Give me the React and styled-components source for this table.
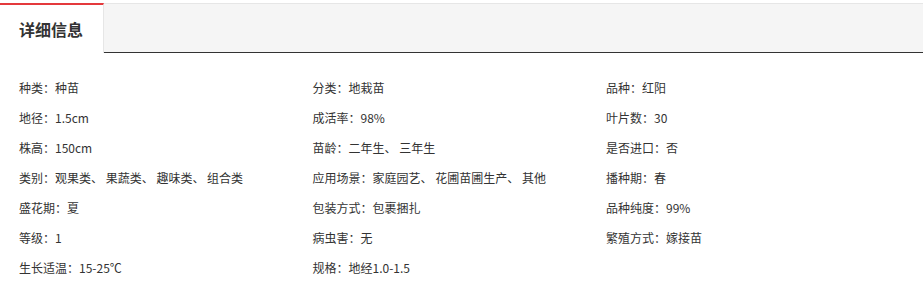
import React from "react";
import styled, { createGlobalStyle } from "styled-components";

const Global = createGlobalStyle`
  html, body { margin: 0; padding: 0; background: #fff; }
  body { font-family: "Noto Sans CJK SC", "Microsoft YaHei", sans-serif; color: #333; }
`;

const Wrap = styled.div`
  padding-top: 3px;
  width: 923px;
`;

const TabBar = styled.div`
  display: flex;
  height: 48px;
  background: #f5f5f5;
  border-top: 1px solid #e6e6e6;
  border-bottom: 1px solid #333;
`;

const Tab = styled.div`
  display: flex;
  align-items: center;
  box-sizing: border-box;
  width: 104px;
  margin-top: -1px;
  height: 50px;
  padding-left: 19px;
  padding-bottom: 1px;
  background: ${(p) => (p.$active ? "#fff" : "transparent")};
  border-top: 2px solid ${(p) => (p.$active ? "#e4393c" : "transparent")};
  border-right: 1px solid #e6e6e6;
  font-size: 16px;
  font-weight: 700;
  color: #333;
`;

const Grid = styled.div`
  display: grid;
  grid-template-columns: repeat(3, 293.5px);
  padding: 20px 0 0 19px;
  font-size: 12px;
  line-height: 30px;
`;

const Item = styled.div`
  white-space: nowrap;
  color: #333;
`;

const items = [
  "种类：种苗", "分类：地栽苗", "品种：红阳",
  "地径：1.5cm", "成活率：98%", "叶片数：30",
  "株高：150cm", "苗龄：二年生、 三年生", "是否进口：否",
  "类别：观果类、 果蔬类、 趣味类、 组合类", "应用场景：家庭园艺、 花圃苗圃生产、 其他", "播种期：春",
  "盛花期：夏", "包装方式：包裹捆扎", "品种纯度：99%",
  "等级：1", "病虫害：无", "繁殖方式：嫁接苗",
  "生长适温：15-25℃", "规格：地经1.0-1.5",
];

export default function App() {
  return (
    <Wrap>
      <Global />
      <TabBar>
        <Tab $active>详细信息</Tab>
      </TabBar>
      <Grid>
        {items.map((t, i) => (
          <Item key={i}>{t}</Item>
        ))}
      </Grid>
    </Wrap>
  );
}
